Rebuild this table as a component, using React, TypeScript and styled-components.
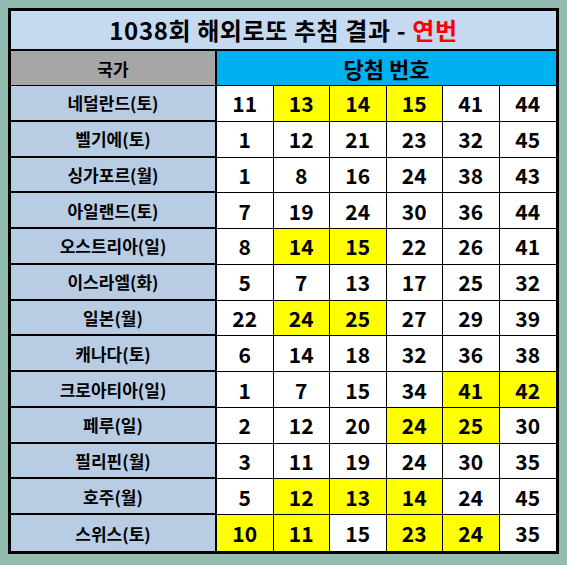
import React from "react";
import styled, { createGlobalStyle } from "styled-components";

const GlobalStyle = createGlobalStyle`
  html, body {
    margin: 0;
    padding: 0;
    background-color: #93bcb0;
  }
  * {
    box-sizing: border-box;
  }
`;

const Page = styled.div`
  width: 567px;
  height: 565px;
  padding: 8px;
  background-color: #93bcb0;
  font-family: "Noto Sans CJK KR", "Noto Sans", sans-serif;
`;

const Board = styled.div`
  width: 551px;
  height: 546px;
  border: 3px solid #000;
  display: grid;
  grid-template-columns: 206px repeat(6, 1fr);
  grid-template-rows: 40px 35px repeat(13, 1fr);
  background-color: #fff;
`;

const Title = styled.div`
  grid-column: 1 / -1;
  background-color: #c5d9f1;
  border-bottom: 2px solid #000;
  display: flex;
  justify-content: center;
  align-items: center;
  padding-bottom: 1px;
  font-size: 24px;
  font-weight: 700;
  color: #000;
  letter-spacing: 0.6px;
`;

const Red = styled.span`
  color: #ff0000;
`;

const HeadCell = styled.div<{ $bg: string }>`
  background-color: ${(p) => p.$bg};
  border-bottom: 1px solid #000;
  display: flex;
  justify-content: center;
  align-items: center;
  font-weight: 700;
  color: #000;
`;

const CountryHead = styled(HeadCell)`
  border-right: 2px solid #000;
  font-size: 17px;
`;

const NumbersHead = styled(HeadCell)`
  grid-column: 2 / -1;
  font-size: 22px;
`;

const Country = styled.div<{ $last: boolean }>`
  background-color: #b8cce4;
  border-right: 2px solid #000;
  border-bottom: ${(p) => (p.$last ? "none" : "2px solid #000")};
  display: flex;
  justify-content: center;
  align-items: center;
  font-size: 17px;
  font-weight: 700;
  color: #000;
`;

const Num = styled.div<{ $hit: boolean; $last: boolean; $edge: boolean }>`
  background-color: ${(p) => (p.$hit ? "#ffff00" : "#ffffff")};
  border-right: ${(p) => (p.$edge ? "none" : "1px solid #000")};
  border-bottom: ${(p) => (p.$last ? "none" : "1px solid #000")};
  display: flex;
  justify-content: center;
  align-items: center;
  font-size: 21px;
  font-weight: 700;
  color: #000;
`;

type Row = { name: string; nums: number[]; hits: number[] };

const rows: Row[] = [
  { name: "네덜란드(토)", nums: [11, 13, 14, 15, 41, 44], hits: [1, 2, 3] },
  { name: "벨기에(토)", nums: [1, 12, 21, 23, 32, 45], hits: [] },
  { name: "싱가포르(월)", nums: [1, 8, 16, 24, 38, 43], hits: [] },
  { name: "아일랜드(토)", nums: [7, 19, 24, 30, 36, 44], hits: [] },
  { name: "오스트리아(일)", nums: [8, 14, 15, 22, 26, 41], hits: [1, 2] },
  { name: "이스라엘(화)", nums: [5, 7, 13, 17, 25, 32], hits: [] },
  { name: "일본(월)", nums: [22, 24, 25, 27, 29, 39], hits: [1, 2] },
  { name: "캐나다(토)", nums: [6, 14, 18, 32, 36, 38], hits: [] },
  { name: "크로아티아(일)", nums: [1, 7, 15, 34, 41, 42], hits: [4, 5] },
  { name: "페루(일)", nums: [2, 12, 20, 24, 25, 30], hits: [3, 4] },
  { name: "필리핀(월)", nums: [3, 11, 19, 24, 30, 35], hits: [] },
  { name: "호주(월)", nums: [5, 12, 13, 14, 24, 45], hits: [1, 2, 3] },
  { name: "스위스(토)", nums: [10, 11, 15, 23, 24, 35], hits: [0, 1, 3, 4] },
];

export default function App() {
  return (
    <Page>
      <GlobalStyle />
      <Board>
        <Title>
          1038회 해외로또 추첨 결과 -&nbsp;<Red>연번</Red>
        </Title>
        <CountryHead $bg="#a6a6a6">국가</CountryHead>
        <NumbersHead $bg="#00b0f0">당첨 번호</NumbersHead>
        {rows.map((row, r) => {
          const last = r === rows.length - 1;
          return (
            <React.Fragment key={row.name}>
              <Country $last={last}>{row.name}</Country>
              {row.nums.map((n, i) => (
                <Num
                  key={i}
                  $hit={row.hits.includes(i)}
                  $last={last}
                  $edge={i === row.nums.length - 1}
                >
                  {n}
                </Num>
              ))}
            </React.Fragment>
          );
        })}
      </Board>
    </Page>
  );
}
